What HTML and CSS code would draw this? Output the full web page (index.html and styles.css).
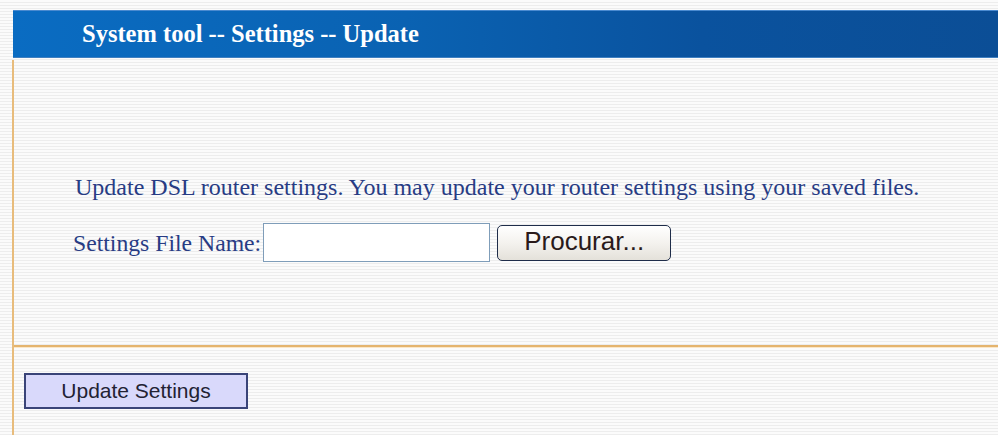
FILE: index.html
```html
<!DOCTYPE html>
<html>
<head>
<meta charset="utf-8">
<title>System tool -- Settings -- Update</title>
<link rel="stylesheet" href="styles.css">
</head>
<body>
<div class="page">
  <div class="titlebar">
    <h1 class="title">System tool -- Settings -- Update</h1>
  </div>
  <div class="panel">
    <div class="content">
      <p class="desc">Update DSL router settings. You may update your router settings using your saved files.</p>
      <div class="field">
        <label class="field-label" for="cfgfile">Settings File Name:</label>
        <input class="file-text" id="cfgfile" type="text">
        <button class="browse" type="button">Procurar...</button>
      </div>
    </div>
    <div class="actions">
      <button class="submit" type="button">Update Settings</button>
    </div>
  </div>
</div>
</body>
</html>
```
FILE: styles.css
```css
html, body {
  margin: 0;
  padding: 0;
  height: 100%;
}

body {
  background: repeating-linear-gradient(to bottom, #fbfbfb 0, #fbfbfb 2px, #ededed 2px, #ededed 3px);
  font-family: "Liberation Serif", "Times New Roman", serif;
  overflow: hidden;
}

.page {
  padding-top: 10px;
}

.titlebar {
  margin-left: 13px;
  height: 48px;
  box-sizing: border-box;
  background: linear-gradient(to right, #0a6cc2 0%, #0a62b2 40%, #0a529e 70%, #0b4e96 100%);
  border-top: 1px solid #4a8ad0;
  border-bottom: 1px solid #3f7fc0;
  display: flex;
  align-items: center;
  padding-left: 69px;
}

.title {
  margin: 0;
  color: #ffffff;
  font-size: 24.5px;
  font-weight: bold;
  line-height: 28px;
}

.panel {
  margin-left: 12px;
  margin-top: 2px;
  border-left: 2px solid #e8bc7c;
  height: 380px;
}

.content {
  padding: 113px 0 0 61px;
  height: 287px;
  box-sizing: border-box;
  border-bottom: 2px solid #e4b46e;
  box-shadow: 0 1px 0 #fbe7c8;
}

.desc {
  margin: 0;
  color: #283c84;
  font-size: 24px;
  line-height: 28px;
  white-space: nowrap;
}

.field {
  margin-top: 22px;
  display: flex;
  align-items: center;
}

.field-label {
  color: #283c84;
  font-size: 23.7px;
  line-height: 28px;
  margin-right: 2px;
  margin-left: -2px;
  white-space: nowrap;
}

.file-text {
  width: 227px;
  height: 39px;
  box-sizing: border-box;
  border: 1px solid #7f9db9;
  background: #ffffff;
  margin: 0;
  padding: 0 4px;
}

.browse {
  margin-left: 7px;
  width: 174px;
  height: 36px;
  box-sizing: border-box;
  border: 1px solid #1f2d4a;
  border-radius: 5px;
  background: linear-gradient(to bottom, #ffffff 0%, #f4f2ee 50%, #e4e1da 100%);
  font-family: "Liberation Sans", Arial, sans-serif;
  font-size: 26px;
  color: #2a1a1a;
  padding: 0 0 2px;
}

.actions {
  padding: 26px 0 0 10px;
}

.submit {
  width: 224px;
  height: 36px;
  box-sizing: border-box;
  border: 2px solid #3a4478;
  background: #d9d9fb;
  font-family: "Liberation Sans", Arial, sans-serif;
  font-size: 21px;
  color: #222233;
  padding: 0;
  margin: 0;
}
```
